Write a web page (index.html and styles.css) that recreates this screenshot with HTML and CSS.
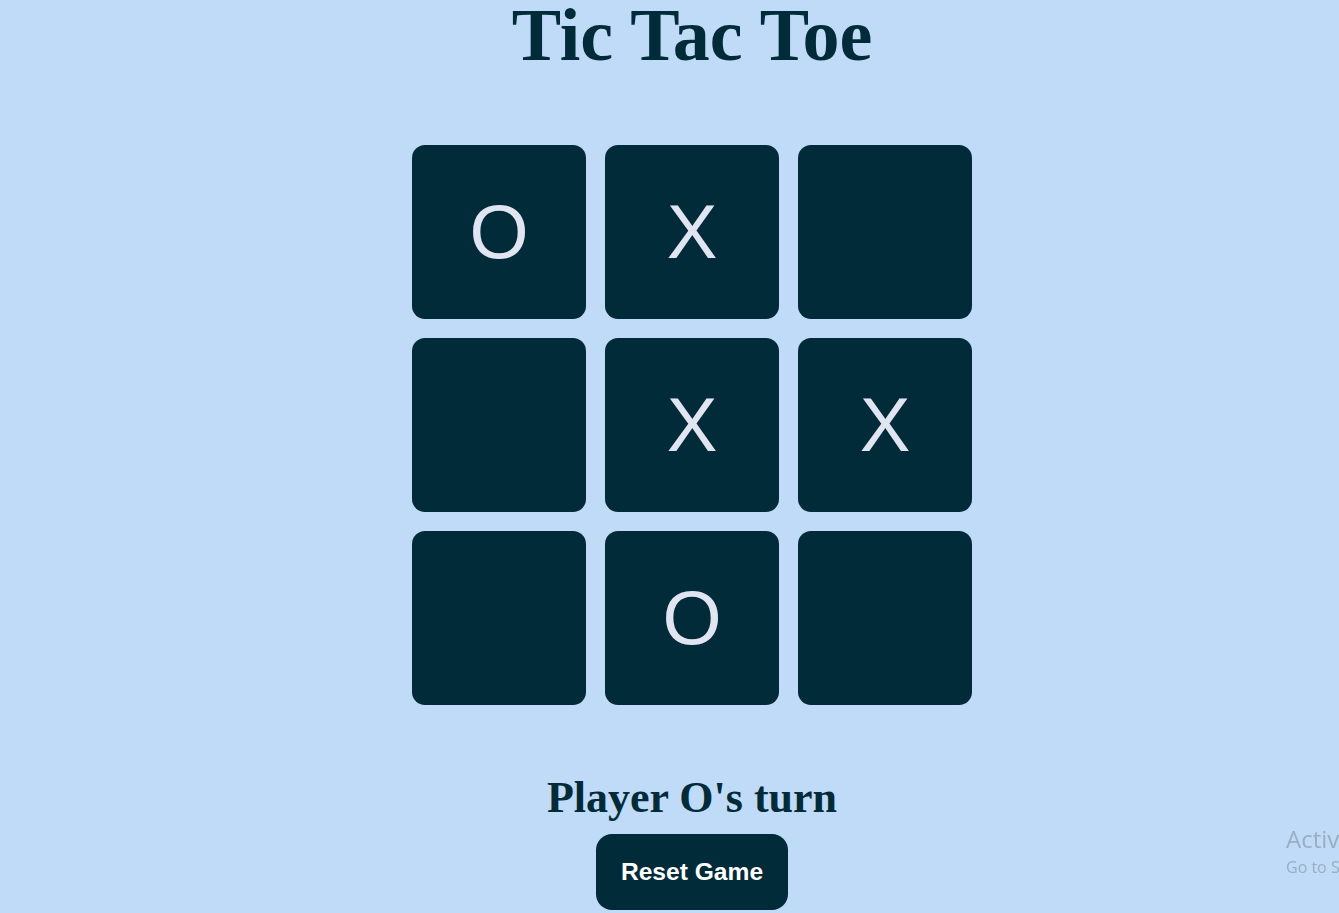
FILE: index.html
```html
<!DOCTYPE html>
<html lang="en">
<head>
<meta charset="utf-8">
<title>Tic Tac Toe</title>
<link rel="stylesheet" href="styles.css">
</head>
<body>
<main class="game">
  <h1 class="title">Tic Tac Toe</h1>
  <div class="board">
    <button class="cell">O</button>
    <button class="cell">X</button>
    <button class="cell"></button>
    <button class="cell"></button>
    <button class="cell">X</button>
    <button class="cell">X</button>
    <button class="cell"></button>
    <button class="cell">O</button>
    <button class="cell"></button>
  </div>
  <p class="status">Player O's turn</p>
  <button class="reset">Reset Game</button>
</main>
<div class="watermark">
  <div class="wm-title">Activate Windows</div>
  <div class="wm-sub">Go to Settings to activate Windows.</div>
</div>
</body>
</html>
```
FILE: styles.css
```css
html, body {
  margin: 0;
  padding: 0;
  background: #bfdbf7;
  overflow: hidden;
  height: 100%;
}

.game {
  display: flex;
  flex-direction: column;
  align-items: center;
  padding-left: 45px;
}

.title {
  margin: 3px 0 0 0;
  font-family: "Liberation Serif", "Times New Roman", serif;
  font-weight: bold;
  font-size: 74px;
  line-height: 64px;
  color: #022b3a;
}

.board {
  margin-top: 78px;
  display: grid;
  grid-template-columns: repeat(3, 173.5px);
  grid-template-rows: repeat(3, 173.5px);
  gap: 19.5px;
}

.cell {
  display: flex;
  align-items: center;
  justify-content: center;
  border: none;
  padding: 0;
  margin: 0;
  background: #022b3a;
  border-radius: 13px;
  color: #e1e5f2;
  font-family: "Liberation Sans", Arial, sans-serif;
  font-size: 76px;
  line-height: 1;
}

.status {
  margin: 65.7px 0 0 0;
  font-family: "Liberation Serif", "Times New Roman", serif;
  font-weight: bold;
  font-size: 44px;
  line-height: 56px;
  color: #022b3a;
}

.reset {
  margin-top: 7.8px;
  border: none;
  background: #022b3a;
  color: #ffffff;
  font-family: "Liberation Sans", Arial, sans-serif;
  font-weight: bold;
  font-size: 24.6px;
  line-height: 28px;
  padding: 24px 25px;
  border-radius: 16px;
}

.watermark {
  position: fixed;
  left: 1286px;
  top: 823px;
  white-space: nowrap;
  color: rgba(120, 130, 140, 0.5);
  font-family: "Open Sans", "Noto Sans", sans-serif;
}

.wm-title {
  font-size: 24px;
  line-height: 32px;
}

.wm-sub {
  font-size: 16px;
  line-height: 24px;
}
```
